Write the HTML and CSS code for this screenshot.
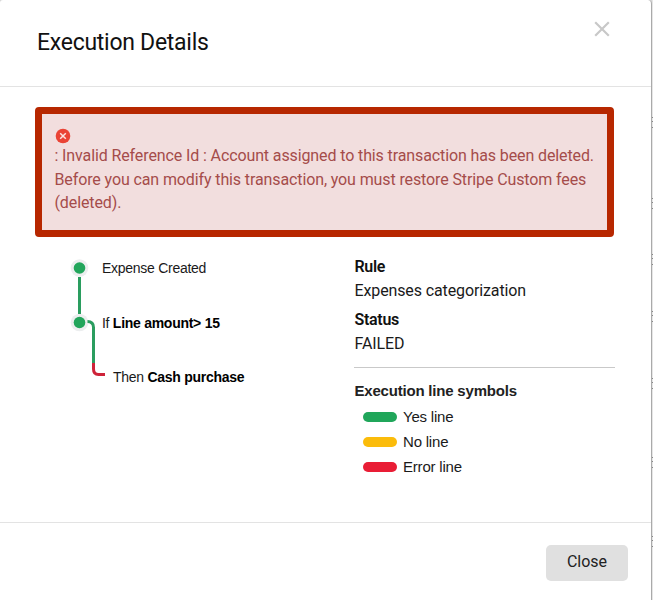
FILE: index.html
```html
<!DOCTYPE html>
<html lang="en">
<head>
<meta charset="utf-8">
<title>Execution Details</title>
<link rel="stylesheet" href="styles.css">
</head>
<body>
<div class="page">
  <section class="dialog">
    <header class="header">
      <h1 class="title">Execution Details</h1>
      <svg class="dismiss" width="16" height="16" viewBox="0 0 16 16"><path d="M1.2 1.2 14.8 14.8M14.8 1.2 1.2 14.8"/></svg>
    </header>
    <main class="body">
      <div class="alert">
        <svg class="alert-icon" width="16" height="16" viewBox="0 0 16 16"><circle cx="8" cy="8" r="7.3"/><path d="M5.200 5.200l5.600 5.600M10.800 5.200l-5.600 5.600"/></svg>
        <p class="alert-text"><span class="line">: Invalid Reference Id : Account assigned to this transaction has been deleted.</span><span class="line">Before you can modify this transaction, you must restore Stripe Custom fees</span><span class="line">(deleted).</span></p>
      </div>
      <div class="columns">
        <div class="flow">
          <svg class="flow-lines" width="38" height="120" viewBox="0 0 38 120">
            <circle class="halo" cx="9.500" cy="9" r="8.800"/><circle class="halo" cx="9.500" cy="63.500" r="8.800"/>
            <path class="yes" d="M9.500 18V55M17.500 62.500c4 0 6 1.500 6 6V104"/>
            <path class="error" d="M23.500 104V110q0 5.500 5 5.500H35"/>
            <circle class="node" cx="9.500" cy="9" r="5.800"/><circle class="node" cx="9.500" cy="63.500" r="5.800"/>
          </svg>
          <div class="steps">
            <div class="step s1">Expense Created</div>
            <div class="step s2">If <b>Line amount&gt; 15</b></div>
            <div class="step s3">Then <b>Cash purchase</b></div>
          </div>
        </div>
        <aside class="details">
          <dl class="facts">
            <dt>Rule</dt><dd>Expenses categorization</dd>
            <dt>Status</dt><dd>FAILED</dd>
          </dl>
          <h2 class="legend-title">Execution line symbols</h2>
          <ul class="legend">
            <li><i class="swatch green"></i>Yes line</li>
            <li><i class="swatch yellow"></i>No line</li>
            <li><i class="swatch red"></i>Error line</li>
          </ul>
        </aside>
      </div>
    </main>
    <footer class="footer"><button class="close">Close</button></footer>
  </section>
  <svg class="backdrop" width="1" height="600" viewBox="0 0 1 600"><path d="M.5 117v1m0 3v1m0 5v1M.5 198v1m0 3v1m0 5v1M.5 254v1m0 3v1m0 5v1M.5 311v1m0 3v1m0 5v1M.5 378v1m0 3v1m0 5v1M.5 457v1m0 3v1m0 5v1M.5 536v1m0 3v1m0 5v1"/></svg>
</div>
</body>
</html>
```
FILE: styles.css
```css
* { box-sizing: border-box; }
body { margin: 0; background: #d5d5d5; color: #1a1a1a; font: 16px/24px Roboto, sans-serif; }
.page { display: flex; width: 653px; height: 600px; overflow: hidden; }
.dialog { width: 652px; height: 600px; background: #fff; border-right: 1px solid #aaa; border-radius: 3px 4px 0 0; display: flex; flex-direction: column; }
.backdrop { background: #e6e6e6; }
.backdrop path { stroke: #888; stroke-width: 1; }
.header { height: 87px; flex: none; border-bottom: 1px solid #e3e3e3; display: flex; justify-content: space-between; padding: 21px 41px 0 37px; }
.title { margin: 7px 0 0; font-size: 23px; line-height: 30px; font-weight: 400; letter-spacing: -0.27px; color: #111; }
.dismiss path { stroke: #c8c8c8; stroke-width: 2.2; fill: none; }
.body { flex: none; height: 435px; padding: 20px 36px 0 35px; }
.alert { width: 579px; height: 130px; border: 7px solid #b72700; border-radius: 4px; background: #f2dede; padding: 14px 0 0 12.5px; color: #a54c4a; }
.alert-icon { display: block; }
.alert-icon circle { fill: #ea4335; }
.alert-icon path { stroke: #fbe4e2; stroke-width: 1.5; }
.alert-text { margin: 0; line-height: 23.5px; white-space: nowrap; letter-spacing: -0.115px; }
.line { display: block; }
.columns { display: flex; justify-content: space-between; padding-top: 22px; }
.flow { display: flex; padding-left: 35px; font: 14px/18px "Liberation Sans", sans-serif; letter-spacing: -0.27px; }
.halo { fill: #eceeef; }
.node { fill: #22a55b; }
.yes, .error { fill: none; stroke-width: 3; }
.yes { stroke: #2a9d5f; }
.error { stroke: #ce2339; }
.steps { margin-left: -6px; }
.step { height: 18px; white-space: nowrap; }
.step b { color: #000; }
.s2 { margin-top: 37px; }
.s3 { margin-top: 36px; padding-left: 11px; }
.details { width: 261px; }
.facts { margin: -4px 0 0; padding: 0 0 11px 0.5px; border-bottom: 1px solid #c9c9c9; }
.facts dt { font-weight: 600; line-height: 24px; letter-spacing: -0.3px; color: #111; }
.facts dd { margin: 0 0 5px; line-height: 24px; letter-spacing: -0.12px; }
.facts dd:last-child { margin: 0; }
.legend-title { margin: 13px 0 3px 0.5px; font: bold 15px/20px "Liberation Sans", sans-serif; letter-spacing: -0.2px; color: #222; }
.legend { list-style: none; margin: 0; padding: 0 0 0 9px; font: 15px/25px "Liberation Sans", sans-serif; letter-spacing: -0.2px; }
.legend li { display: flex; align-items: center; gap: 6px; }
.swatch { width: 34px; height: 10px; border-radius: 5px; }
.green { background: #20a65a; }
.yellow { background: #fbbc0b; }
.red { background: #e91d35; }
.footer { flex: none; height: 78px; border-top: 1px solid #e3e3e3; padding: 22px 23px 0; display: flex; justify-content: flex-end; }
.close { width: 82px; height: 36px; border: 0; border-radius: 5px; background: #e0e0e0; color: #222; font: 16px/24px Roboto, sans-serif; padding: 0 0 3px; }
```
